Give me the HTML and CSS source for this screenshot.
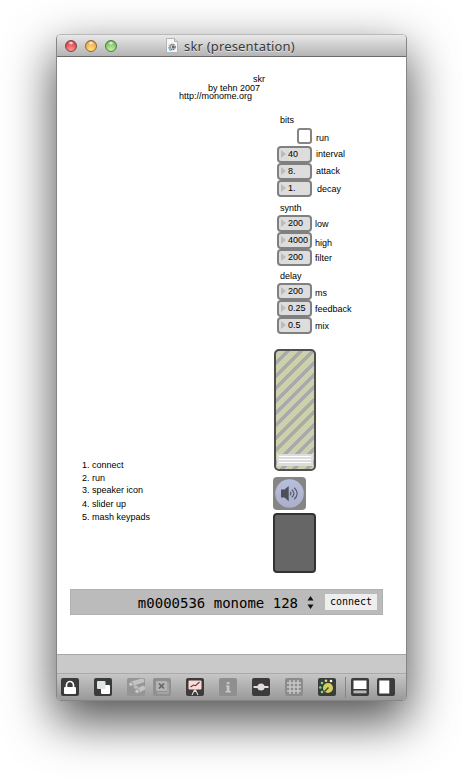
FILE: index.html
```html
<!DOCTYPE html>
<html lang="en">
<head>
<meta charset="utf-8">
<title>skr (presentation)</title>
<link rel="stylesheet" href="styles.css">
</head>
<body>
<main class="window">
  <header class="titlebar">
    <div class="lights"><i class="light red"></i><i class="light amber"></i><i class="light green"></i></div>
    <svg class="doc" width="12" height="15" viewBox="0 0 12 15"><path d="M.5.5h8l3 3v11H.5z" fill="#f7f7f7" stroke="#b5b5b5"/><path d="M8.5.5v3h3" fill="#ddd" stroke="#999" stroke-width=".7"/><circle cx="6.500" cy="9" r="2.600" fill="#ddd" stroke="#777" stroke-width="1.600" stroke-dasharray="1.500 .6"/><path d="M2.500 8l2-2" stroke="#e8a45e"/><path d="M2.500 9l2 4" stroke="#52bce8" stroke-width="1.300"/><path d="M6 8l2 1-2 1" stroke="#444" fill="none"/></svg>
    <h1 class="title">skr (presentation)</h1>
  </header>

  <section class="patch">
    <div class="credits">
      <p class="name">skr</p>
      <p class="author">by tehn 2007</p>
      <p class="site">http://monome.org</p>
    </div>
    <div class="columns">
      <ol class="steps">
        <li>1. connect</li><li>2. run</li><li class="tight">3. speaker icon</li><li class="loose">4. slider up</li><li>5. mash keypads</li>
      </ol>
      <div class="controls">
        <h2 class="group first">bits</h2>
        <div class="row run"><span class="check"></span><span class="label x1">run</span></div>
        <div class="row"><span class="num">40</span><span class="label x1">interval</span></div>
        <div class="row"><span class="num">8.</span><span class="label x1">attack</span></div>
        <div class="row"><span class="num">1.</span><span class="label x2">decay</span></div>
        <h2 class="group">synth</h2>
        <div class="row"><span class="num">200</span><span class="label">low</span></div>
        <div class="row"><span class="num">4000</span><span class="label low2">high</span></div>
        <div class="row"><span class="num">200</span><span class="label">filter</span></div>
        <h2 class="group last">delay</h2>
        <div class="row"><span class="num">200</span><span class="label low1">ms</span></div>
        <div class="row"><span class="num">0.25</span><span class="label">feedback</span></div>
        <div class="row"><span class="num">0.5</span><span class="label">mix</span></div>
        <div class="slider"><div class="knob"><i></i><i></i><i></i></div></div>
        <svg class="speaker" width="33" height="33" viewBox="0 0 33 33"><defs><linearGradient id="disc" x1="0" y1="0" x2="0" y2="1"><stop offset="0" stop-color="#b6bfdc"/><stop offset="1" stop-color="#adaecb"/></linearGradient></defs><rect width="33" height="33" rx="4" fill="#858585"/><circle cx="16.500" cy="16.500" r="14.300" fill="url(#disc)"/><path d="M8 12.500h3.500L15.700 9v15.200l-4.200-3.700H8z" fill="#4b505b"/><path d="M17 15q2 1.500 0 3.200M18.800 12.700q4.200 3.800 0 7.600M21.200 10.700q6 5.800 0 11.600" fill="none" stroke="#555b6c" stroke-width="1.200"/></svg>
        <div class="panel"></div>
      </div>
    </div>
    <div class="device">
      <span class="serial">m0000536 monome 128</span>
      <svg class="arrows" width="7" height="13" viewBox="0 0 7 13"><path d="M3.500 0l3 4.500h-6zM3.500 13l3-4.500h-6z" fill="#111"/></svg>
      <button class="connect">connect</button>
    </div>
  </section>

  <div class="status"></div>
  <footer class="toolbar">
    <svg class="tool" viewBox="0 0 18 18"><rect width="18" height="18" rx="2" fill="#3b3b3b"/><path d="M5.500 9V7a3.500 3.500 0 0 1 7 0v2" fill="none" stroke="#f8f8f8" stroke-width="1.700"/><rect x="3" y="9" width="12" height="7" rx="1" fill="#fff"/></svg>
    <svg class="tool" viewBox="0 0 18 18"><rect width="18" height="18" rx="2" fill="#3b3b3b"/><rect x="7" y="7" width="9" height="9" rx="1" fill="#fff"/><rect x="3" y="3" width="8.500" height="8" rx="1" fill="#dfe7e4"/></svg>
    <svg class="tool" viewBox="0 0 18 18"><rect width="18" height="18" rx="2" fill="#959595"/><path d="M4 6l11-3.300M10.500 13l5.500-3" stroke="#c2c2c2" stroke-width="4.500" stroke-linecap="round"/><path d="M7 8.500l4 1.500" stroke="#bbb" stroke-width="3"/><circle cx="3.800" cy="6.200" r="2.200" fill="#c8c8c8" stroke="#8b8b8b" stroke-width=".8"/><circle cx="10" cy="13.200" r="2.300" fill="#c8c8c8" stroke="#8b8b8b" stroke-width=".8"/></svg>
    <svg class="tool near" viewBox="0 0 18 18"><rect width="18" height="18" rx="2" fill="#909090"/><path d="M5 14v1h10V5h-1" fill="none" stroke="#a9a9a9" stroke-width="1.500"/><rect x="3" y="3" width="11" height="10" rx="1" fill="#b4b4b4"/><path d="M6 5.500l5 5M11 5.500l-5 5" stroke="#656565" stroke-width="1.700"/></svg>
    <svg class="tool" viewBox="0 0 18 18"><rect width="18" height="18" rx="2" fill="#3b3b3b"/><rect x="2.500" y="2.500" width="13" height="9" rx="1" fill="#ffd9d5"/><path d="M4.500 9l3-2 2 .7 4-3.700" fill="none" stroke="#51403f" stroke-width="1.100"/><path d="M8.500 12L6 17M9.500 12l2.500 5M9 11v3" stroke="#ddd" stroke-width="1.100"/></svg>
    <svg class="tool" viewBox="0 0 18 18"><rect width="18" height="18" rx="2" fill="#8f8f8f"/><path d="M7.800 4h2.700v2.200H7.800zM7 7.500h3.500V13H12v1.500H6.500V13h1.300V9H7z" fill="#c6c6c6"/></svg>
    <svg class="tool" viewBox="0 0 18 18"><rect width="18" height="18" rx="2" fill="#3b3b3b"/><path d="M1.500 9h15" stroke="#ddd" stroke-width="1.800"/><circle cx="9" cy="9" r="3.600" fill="#e4dada"/></svg>
    <svg class="tool" viewBox="0 0 18 18"><rect width="18" height="18" rx="2" fill="#8c8c8c"/><path d="M5 2v14M9 2v14M13 2v14M2 5h14M2 9h14M2 13h14" stroke="#c8c8c8" stroke-width="1.500"/></svg>
    <svg class="tool" viewBox="0 0 18 18"><rect width="18" height="18" rx="2" fill="#3b3b3b"/><circle cx="10" cy="10" r="5" fill="#d2d05d"/><path d="M6.500 13.500L10.500 9.500" stroke="#45452f" stroke-width="1.500"/><g fill="#73dc87"><circle cx="4" cy="14" r="1.300"/><circle cx="2.300" cy="9.500" r="1.300"/><circle cx="4" cy="5" r="1.300"/></g><circle cx="8" cy="2.800" r="1.300" fill="#e5df64"/><circle cx="13" cy="3" r="1.300" fill="#fff"/></svg>
    <i class="divider"></i>
    <svg class="tool" viewBox="0 0 18 18"><rect width="18" height="18" rx="2" fill="#3b3b3b"/><rect x="2.500" y="2.500" width="13" height="8.500" fill="#fff"/><rect x="2.500" y="12.500" width="13" height="2.800" fill="#b9b9b9"/></svg>
    <svg class="tool near" viewBox="0 0 18 18"><rect width="18" height="18" rx="2" fill="#3b3b3b"/><rect x="2.300" y="2.500" width="10" height="13" fill="#fff"/></svg>
  </footer>
</main>
</body>
</html>
```

FILE: styles.css
```css
* { box-sizing: border-box; }
body { margin: 0; background: #fff; height: 779px; overflow: hidden; padding: 34px 0 0 56px; font: 9px/10px "Liberation Sans", Arial, sans-serif; color: #000; }
p, h1, h2, ol { margin: 0; padding: 0; font-size: inherit; font-weight: normal; list-style: none; }
svg { display: block; flex: none; }
.window { width: 351px; height: 667px; border: 1px solid #858585; border-top-color: #b9b9b9; border-radius: 5px; background: #fff; box-shadow: 0 19px 48px 2px rgba(0,0,0,.68); display: flex; flex-direction: column; overflow: hidden; }
.titlebar { height: 22px; flex: none; display: flex; align-items: center; padding-left: 8px; background: linear-gradient(#e8e8e8, #b4b4b4); border-bottom: 1px solid #6b6b6b; }
.lights { display: flex; gap: 8px; }
.light { width: 12px; height: 12px; border-radius: 50%; border: 1px solid #814143; }
.red { background: radial-gradient(ellipse 3px 2px at 5px 2px, #fff, transparent), radial-gradient(circle at 5px 9px, #ff9a98, #e44c50 65%, #a7343a); }
.amber { border-color: #916337; background: radial-gradient(ellipse 3px 2px at 5px 2px, #fff, transparent), radial-gradient(circle at 5px 9px, #ffe47c, #eeb257 65%, #af7534); }
.green { border-color: #4c7d42; background: radial-gradient(ellipse 3px 2px at 5px 2px, #fff, transparent), radial-gradient(circle at 5px 9px, #c3f49f, #83c66c 65%, #4e8843); }
.doc { margin-left: 49px; }
.title { margin-left: 6px; font: 13px/18px "Noto Sans", "Open Sans", sans-serif; letter-spacing: .18px; color: #3b3b3b; text-shadow: 0 1px #e2e2e2; white-space: nowrap; }
.patch { height: 597px; flex: none; padding-top: 17px; display: flex; flex-direction: column; }
.credits { height: 27px; }
.name { margin-left: 196px; }
.author { margin: -1px 0 0 151px; }
.site { margin: -2px 0 0 122px; }
.columns { display: flex; justify-content: space-between; height: 488px; flex: none; }
.steps { margin: 358px 0 0 25px; line-height: 13px; }
.tight { margin-top: -1px; }
.loose { margin-top: 1px; }
.controls { width: 132px; padding-top: 10px; }
.group { height: 18px; line-height: 16px; padding: 3px 0 0 6px; }
.first { line-height: 12px; }
.last { height: 17px; line-height: 14px; }
.row { display: flex; height: 17px; padding-left: 3px; }
.run { height: 18px; padding-left: 23px; margin-top: -1px; }
.check { width: 15px; height: 16px; border: 2px solid #858585; border-radius: 3px; }
.num { width: 35px; height: 17px; border: 2px solid #808080; border-radius: 4px; background: #ddd; line-height: 12px; padding-left: 9px; position: relative; }
.num::before { content: ""; position: absolute; left: 2px; top: 2px; border-left: 5px solid #bbb; border-top: 4.500px solid transparent; border-bottom: 4.500px solid transparent; }
.label { margin-left: 3px; line-height: 10px; padding-top: 4px; }
.x1 { margin-left: 4px; padding-top: 3px; }
.x2 { margin-left: 5px; padding-top: 4px; }
.low1 { padding-top: 5px; }
.low2 { padding-top: 6px; }
.run .label { padding-top: 5px; }
.slider { width: 42px; height: 122px; margin: 15px 0 0; border: 2px solid #4f4f4f; border-radius: 5px; background: repeating-linear-gradient(135deg, #aaa 0 1.800px, #cdd1ab 1.800px 6.970px, #aaa 6.970px 8.770px); padding: 103px 1px 0; }
.knob { height: 12px; background: #dcdcdc; padding: 2px 2px 0; display: flex; flex-direction: column; gap: 2px; }
.knob i { height: 1px; background: #fff; }
.speaker { margin: 6px 0 0 -1px; }
.panel { width: 43px; height: 60px; margin: 3px 0 0 -1px; border: 2px solid #333; border-radius: 4px; background: #666; }
.device { width: 313px; height: 26px; margin-left: 13px; border: 1px solid #b1b1b1; background: #bbb; display: flex; align-items: center; justify-content: flex-end; padding-right: 5px; flex: none; }
.serial { font: 14px/24px "DejaVu Sans Mono", monospace; padding-top: 1px; }
.arrows { margin: 0 11px 0 9px; }
.connect { width: 52px; height: 16px; border: 0; padding: 0; background: #eee; color: #000; font: 10px/16px "DejaVu Sans Mono", monospace; }
.status { height: 19px; flex: none; background: #c9c9c9; border-top: 1px solid #a6a6a6; }
.toolbar { flex: 1; display: flex; align-items: center; padding-left: 4px; border-top: 1px solid #aaa; background: linear-gradient(#c6c6c6, #999); }
.tool { width: 18px; height: 18px; margin-right: 15px; }
.tool:has(+ .near) { margin-right: 8px; }
.divider { flex: none; width: 1px; height: 21px; background: #858585; margin: 0 5px 0 -6px; }
```
